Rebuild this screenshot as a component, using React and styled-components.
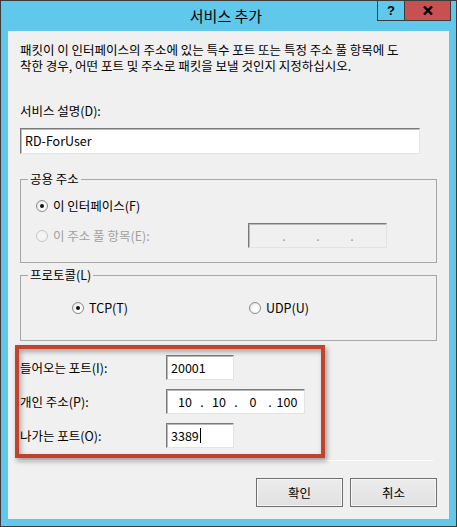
import styled, { createGlobalStyle } from 'styled-components';

const GlobalStyle = createGlobalStyle`
	html, body {
		margin: 0;
		padding: 0;
		background: #60c8ea;
	}
	* {
		box-sizing: border-box;
	}
`;

const FONT = `"Noto Sans CJK KR", "Noto Sans", sans-serif`;

const Window = styled.div`
	width: 457px;
	height: 527px;
	border: 1px solid #3b3b3b;
	background: #60c8ea;
	display: flex;
	flex-direction: column;
	font-family: ${FONT};
	font-size: 12.5px;
	color: #000;
`;

const TitleBar = styled.div`
	height: 30px;
	display: grid;
	grid-template-columns: 1fr auto 1fr;
	padding-right: 5px;
`;

const Title = styled.div`
	grid-column: 2;
	font-size: 15px;
	line-height: 30px;
	color: #000;
`;

const Caption = styled.div`
	grid-column: 3;
	justify-self: end;
	align-self: start;
	display: flex;
`;

const CaptionButton = styled.div`
	height: 20px;
	width: ${(p) => p.$w}px;
	border: 1px solid #3b3b3b;
	border-top: none;
	border-left: ${(p) => (p.$first ? '1px solid #3b3b3b' : 'none')};
	background: ${(p) => p.$bg};
	display: flex;
	align-items: center;
	justify-content: center;
	font-family: "Liberation Sans", sans-serif;
	font-weight: bold;
	font-size: 13px;
`;

const ClientWrap = styled.div`
	flex: 1;
	padding: 0 7px 7px 7px;
	display: flex;
`;

const Client = styled.div`
	flex: 1;
	background: #f0f0f0;
	padding: 11px 12px 0 12px;
	display: flex;
	flex-direction: column;
`;

const Intro = styled.p`
	margin: 0;
	line-height: 16px;
	white-space: nowrap;
`;

const FieldLabel = styled.div`
	margin-top: 29px;
	line-height: 16px;
`;

const TextBox = styled.div`
	height: ${(p) => p.$h || 25}px;
	width: ${(p) => p.$w}px;
	margin-top: ${(p) => p.$mt || 0}px;
	border: 1px solid;
	border-color: #7a7a7a #e3e3e3 #e3e3e3 #7a7a7a;
	box-shadow: inset 1px 1px 0 #b9b9b9;
	background: #fff;
	padding: 0 4px;
	display: flex;
	align-items: center;
	line-height: 16px;
`;

const IpBox = styled.div`
	height: 25px;
	width: 139px;
	border: 1px solid;
	border-color: #7a7a7a #e3e3e3 #e3e3e3 #7a7a7a;
	box-shadow: inset 1px 1px 0 #b9b9b9;
	background: ${(p) => (p.$disabled ? '#f0f0f0' : '#fff')};
	color: ${(p) => (p.$disabled ? '#9a9a9a' : '#000')};
	padding-left: 3px;
	display: flex;
	align-items: center;
`;

const IpSeg = styled.span`
	width: 30px;
	text-align: center;
`;

const IpDot = styled.span`
	width: 4px;
	text-align: center;
`;

const Group = styled.fieldset`
	margin: ${(p) => p.$mt}px 0 0 0;
	padding: 0;
	border: 1px solid #a7a7a7;
	min-width: 0;
`;

const Legend = styled.legend`
	margin-left: 7px;
	padding: 0 2px;
	line-height: 16px;
`;

const GroupBody = styled.div`
	padding: ${(p) => p.$pad};
	display: flex;
	flex-direction: column;
`;

const OptionRow = styled.div`
	display: grid;
	grid-template-columns: ${(p) => p.$cols};
	align-items: center;
	height: ${(p) => p.$h || 16}px;
	margin-top: ${(p) => p.$mt || 0}px;
`;

const RadioLabel = styled.label`
	display: flex;
	align-items: center;
	gap: 5px;
	line-height: 16px;
	color: ${(p) => (p.$disabled ? '#a0a0a0' : '#000')};
	white-space: nowrap;
`;

const RadioCircle = styled.span`
	width: 12px;
	height: 12px;
	border-radius: 50%;
	border: 1px solid ${(p) => (p.$disabled ? '#c4c4c4' : '#8a8a8a')};
	background: ${(p) =>
		p.$disabled ? '#f4f4f4' : 'radial-gradient(circle at 65% 65%, #ffffff 30%, #dcdcdc 100%)'};
	display: flex;
	align-items: center;
	justify-content: center;

	&::after {
		content: '';
		width: 4px;
		height: 4px;
		border-radius: 50%;
		background: ${(p) => (p.$checked ? '#111' : 'transparent')};
	}
`;

const Ports = styled.div`
	position: relative;
	margin-top: 14px;
	display: flex;
	flex-direction: column;
	gap: 9px;
`;

const PortRow = styled.div`
	display: grid;
	grid-template-columns: 146px auto;
	align-items: center;
	height: 25px;
`;

const Highlight = styled.div`
	position: absolute;
	left: -5px;
	top: -10px;
	width: 310px;
	height: 113px;
	border: 4px solid #c1432e;
	box-shadow: 2px 3px 5px rgba(0, 0, 0, 0.35), inset 2px 3px 5px rgba(0, 0, 0, 0.3);
	pointer-events: none;
`;

const Caret = styled.span`
	display: inline-block;
	width: 1px;
	height: 15px;
	background: #000;
	margin-left: 1px;
`;

const Separator = styled.div`
	margin: 12px 4px 0 0;
	height: 1px;
	background: #a0a0a0;
	border-bottom: 1px solid #fff;
`;

const ButtonBar = styled.div`
	margin-top: 17px;
	display: flex;
	justify-content: flex-end;
	gap: 7px;
`;

const Button = styled.button`
	width: 87px;
	height: 29px;
	font-family: ${FONT};
	font-size: 12.5px;
	color: #000;
	border: 1px solid #6f6f6f;
	box-shadow: inset 0 0 0 1px #f7f7f7;
	background: linear-gradient(#ececec, #e1e1e1);
	padding: 0;
`;

function Radio({ label, checked, disabled }) {
	return (
		<RadioLabel $disabled={disabled}>
			<RadioCircle $checked={checked} $disabled={disabled} />
			{label}
		</RadioLabel>
	);
}

function IpAddress({ parts, disabled }) {
	return (
		<IpBox $disabled={disabled}>
			{parts.map((p, i) => (
				<span key={i} style={{ display: 'contents' }}>
					<IpSeg>{p}</IpSeg>
					{i < 3 && <IpDot>.</IpDot>}
				</span>
			))}
		</IpBox>
	);
}

export default function App() {
	return (
		<>
			<GlobalStyle />
			<Window>
				<TitleBar>
					<Title>서비스 추가</Title>
					<Caption>
						<CaptionButton $w={28} $bg="#60c8ea" $first>?</CaptionButton>
						<CaptionButton $w={46} $bg="#c75050">
							<svg width="10" height="9" viewBox="0 0 10 9">
								<path d="M1 0.5 L9 8.5 M9 0.5 L1 8.5" stroke="#000" strokeWidth="2.4" />
							</svg>
						</CaptionButton>
					</Caption>
				</TitleBar>
				<ClientWrap>
					<Client>
						<Intro>
							패킷이 이 인터페이스의 주소에 있는 특수 포트 또는 특정 주소 풀 항목에 도
							<br />
							착한 경우, 어떤 포트 및 주소로 패킷을 보낼 것인지 지정하십시오.
						</Intro>

						<FieldLabel>서비스 설명(D):</FieldLabel>
						<TextBox $w={400} $h={26} $mt={9}>RD-ForUser</TextBox>

						<Group $mt={17}>
							<Legend>공용 주소</Legend>
							<GroupBody $pad="11px 0 14px 15px">
								<OptionRow $cols="212px auto">
									<Radio label="이 인터페이스(F)" checked />
								</OptionRow>
								<OptionRow $cols="212px auto" $h={25} $mt={9}>
									<Radio label="이 주소 풀 항목(E):" disabled />
									<IpAddress parts={['', '', '', '']} disabled />
								</OptionRow>
							</GroupBody>
						</Group>

						<Group $mt={4}>
							<Legend>프로토콜(L)</Legend>
							<GroupBody $pad="17px 0 24px 51px">
								<OptionRow $cols="177px auto">
									<Radio label="TCP(T)" checked />
									<Radio label="UDP(U)" />
								</OptionRow>
							</GroupBody>
						</Group>

						<Ports>
							<PortRow>
								<span>들어오는 포트(I):</span>
								<TextBox $w={68}>20001</TextBox>
							</PortRow>
							<PortRow>
								<span>개인 주소(P):</span>
								<IpAddress parts={['10', '10', '0', '100']} />
							</PortRow>
							<PortRow>
								<span>나가는 포트(O):</span>
								<TextBox $w={68}>
									3389
									<Caret />
								</TextBox>
							</PortRow>
							<Highlight />
						</Ports>

						<Separator />

						<ButtonBar>
							<Button>확인</Button>
							<Button>취소</Button>
						</ButtonBar>
					</Client>
				</ClientWrap>
			</Window>
		</>
	);
}
